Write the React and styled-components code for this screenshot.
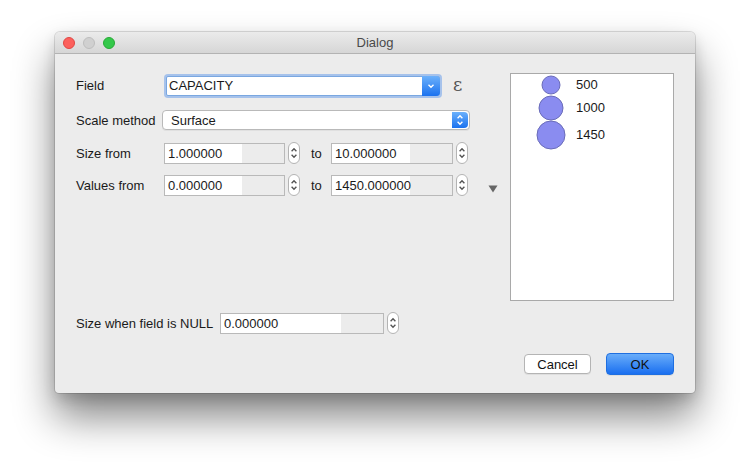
import React from "react";
import styled, { createGlobalStyle } from "styled-components";

const Global = createGlobalStyle`
  html, body { margin: 0; padding: 0; background: #ffffff; }
  body { font-family: "Liberation Sans", Arial, sans-serif; font-size: 13px; color: #1a1a1a; }
  * { box-sizing: border-box; }
`;

const Page = styled.div`
  width: 750px;
  height: 473px;
  padding: 32px 55px 0 55px;
  overflow: hidden;
`;

const Window = styled.div`
  width: 640px;
  height: 361px;
  display: flex;
  flex-direction: column;
  background: #ececec;
  border-radius: 5px 5px 4px 4px;
  box-shadow: 0 24px 40px rgba(0, 0, 0, 0.48), 0 0 0 1px rgba(0, 0, 0, 0.12), 0 6px 14px rgba(0,0,0,0.14);
  overflow: hidden;
`;

const TitleBar = styled.div`
  height: 22px;
  flex: none;
  display: flex;
  align-items: center;
  padding-left: 8px;
  position: relative;
  background: linear-gradient(#ebebeb, #d6d6d6);
  border-bottom: 1px solid #b3b3b3;
`;

const Lights = styled.div`
  display: flex;
  gap: 8px;
`;

const Light = styled.span`
  width: 12px;
  height: 12px;
  border-radius: 50%;
  background: ${(p) => p.$c};
  border: 1px solid ${(p) => p.$b};
`;

const Title = styled.div`
  position: absolute;
  left: 0;
  right: 0;
  text-align: center;
  font-size: 13px;
  color: #4a4a4a;
  pointer-events: none;
`;

const Body = styled.div`
  flex: 1;
  display: flex;
  flex-direction: column;
  padding: 19px 21px 18px 21px;
`;

const Top = styled.div`
  height: 228px;
  display: flex;
`;

const Form = styled.div`
  width: 394px;
  display: flex;
  flex-direction: column;
  gap: 10px;
`;

const Row = styled.div`
  height: ${(p) => p.$h}px;
  display: flex;
  align-items: center;
`;

const Label = styled.div`
  width: ${(p) => p.$w || 86}px;
  flex: none;
  white-space: nowrap;
`;

const Combo = styled.div`
  position: relative;
  flex: none;
  height: 20px;
  width: ${(p) => p.$w}px;
  margin-left: ${(p) => p.$ml || 0}px;
  background: #fff;
  border: 1px solid ${(p) => (p.$focus ? "#7aa7e0" : "#b9b9b9")};
  border-radius: ${(p) => (p.$focus ? 2 : 4)}px;
  display: flex;
  align-items: center;
  padding-left: ${(p) => p.$pl}px;
  box-shadow: ${(p) =>
    p.$focus ? "0 0 0 2px rgba(110, 160, 235, 0.55)" : "0 1px 0 rgba(0,0,0,0.05)"};
`;

const ComboBtn = styled.div`
  position: absolute;
  top: ${(p) => (p.$inset ? 1 : -1)}px;
  bottom: ${(p) => (p.$inset ? 1 : -1)}px;
  right: ${(p) => (p.$inset ? 1 : -1)}px;
  width: ${(p) => p.$w}px;
  border-radius: 0 4px 4px 0;
  background: linear-gradient(#6cb1fb, #1b72ef);
  display: flex;
  align-items: center;
  justify-content: center;
`;

const Epsilon = styled.div`
  margin-left: 13px;
  font-family: "DejaVu Serif", "Liberation Serif", serif;
  font-size: 18px;
  color: #555;
  line-height: 1;
  margin-top: -2px;
`;

const SpinField = styled.div`
  flex: none;
  width: ${(p) => p.$w}px;
  height: 21px;
  margin-left: ${(p) => p.$ml || 0}px;
  border: 1px solid #b9b9b9;
  background: linear-gradient(to right, #ffffff 0, #ffffff ${(p) => p.$white}px, #ececec ${(p) => p.$white}px);
  display: flex;
  align-items: center;
  padding-left: 3px;
`;

const Stepper = styled.div`
  width: 12px;
  height: 22px;
  margin-left: 3px;
  border: 1px solid #b4b4b4;
  border-radius: 6px;
  background: #fff;
  display: flex;
  align-items: center;
  justify-content: center;
  flex: none;
`;

const To = styled.div`
  width: 31px;
  padding-left: 11px;
  flex: none;
`;

const Side = styled.div`
  width: 40px;
  display: flex;
  justify-content: center;
  padding-top: 112px;
  padding-left: 6px;
`;

const Preview = styled.div`
  width: 164px;
  height: 228px;
  background: #fff;
  border: 1px solid #a9a9a9;
  display: flex;
  flex-direction: column;
`;

const LegendRow = styled.div`
  height: ${(p) => p.$h}px;
  display: flex;
  align-items: center;
  flex: none;
`;

const Symbol = styled.svg`
  width: 32px;
  height: 32px;
  margin-left: 24px;
  flex: none;
  overflow: visible;
`;

const LegendText = styled.span`
  margin-left: 9px;
  font-size: 13px;
`;

const NullRow = styled.div`
  margin-top: 11px;
  height: 22px;
  display: flex;
  align-items: center;
`;

const Footer = styled.div`
  margin-top: 19px;
  height: 22px;
  display: flex;
  justify-content: flex-end;
  align-items: center;
  gap: 15px;
`;

const Button = styled.div`
  width: ${(p) => p.$w}px;
  height: ${(p) => (p.$primary ? 22 : 20)}px;
  border-radius: 4px;
  display: flex;
  align-items: center;
  justify-content: center;
  font-size: 13px;
  color: #111;
  background: ${(p) => (p.$primary ? "linear-gradient(#69adfa, #1a6ff0)" : "#fff")};
  border: 1px solid ${(p) => (p.$primary ? "#1f6fe0" : "#b4b4b4")};
  box-shadow: 0 1px 0 rgba(0,0,0,0.06);
`;

const ChevDown = () => (
  <svg width="8" height="6" viewBox="0 0 8 6">
    <path d="M1.5 1.8 L4 4.2 L6.5 1.8" fill="none" stroke="#fff" strokeWidth="1.4" />
  </svg>
);

const ChevUpDown = ({ color = "#fff", w = 8 }) => (
  <svg width={w} height="14" viewBox="0 0 8 14">
    <path d="M1.6 5.2 L4 2.8 L6.4 5.2" fill="none" stroke={color} strokeWidth="1.4" />
    <path d="M1.6 8.8 L4 11.2 L6.4 8.8" fill="none" stroke={color} strokeWidth="1.4" />
  </svg>
);

const Spin = ({ value, w, white, ml }) => (
  <>
    <SpinField $w={w} $white={white} $ml={ml}>
      {value}
    </SpinField>
    <Stepper>
      <ChevUpDown color="#555" w={8} />
    </Stepper>
  </>
);

const legend = [
  { v: "500", r: 9, h: 21 },
  { v: "1000", r: 12, h: 25 },
  { v: "1450", r: 14, h: 29 },
];

export default function App() {
  return (
    <Page>
      <Global />
      <Window>
        <TitleBar>
          <Lights>
            <Light $c="#fc605c" $b="#df4744" />
            <Light $c="#d0d0d0" $b="#bdbdbd" />
            <Light $c="#34c84a" $b="#27aa35" />
          </Lights>
          <Title>Dialog</Title>
        </TitleBar>
        <Body>
          <Top>
            <Form>
              <Row $h={25}>
                <Label>Field</Label>
                <Combo $w={274} $ml={4} $pl={2} $focus>
                  CAPACITY
                  <ComboBtn $w={18}>
                    <ChevDown />
                  </ComboBtn>
                </Combo>
                <Epsilon>ε</Epsilon>
              </Row>
              <Row $h={24}>
                <Label>Scale method</Label>
                <Combo $w={308} $pl={8}>
                  Surface
                  <ComboBtn $w={16} $inset>
                    <ChevUpDown />
                  </ComboBtn>
                </Combo>
              </Row>
              <Row $h={22}>
                <Label>Size from</Label>
                <Spin value="1.000000" w={121} white={77} ml={2} />
                <To>to</To>
                <Spin value="10.000000" w={122} white={78} />
              </Row>
              <Row $h={22}>
                <Label>Values from</Label>
                <Spin value="0.000000" w={121} white={77} ml={2} />
                <To>to</To>
                <Spin value="1450.000000" w={122} white={78} />
              </Row>
            </Form>
            <Side>
              <svg width="10" height="8" viewBox="0 0 10 8">
                <path d="M0.5 0.5 H9.5 L5 7.5 Z" fill="#666" />
              </svg>
            </Side>
            <Preview>
              {legend.map((l) => (
                <LegendRow key={l.v} $h={l.h}>
                  <Symbol viewBox="0 0 32 32">
                    <circle cx="16" cy="16" r={l.r} fill="#8a8cf0" stroke="#6a6cb8" strokeWidth="1" />
                  </Symbol>
                  <LegendText>{l.v}</LegendText>
                </LegendRow>
              ))}
            </Preview>
          </Top>
          <NullRow>
            <Label $w={144}>Size when field is NULL</Label>
            <Spin value="0.000000" w={164} white={120} />
          </NullRow>
          <Footer>
            <Button $w={67}>Cancel</Button>
            <Button $w={68} $primary>
              OK
            </Button>
          </Footer>
        </Body>
      </Window>
    </Page>
  );
}
